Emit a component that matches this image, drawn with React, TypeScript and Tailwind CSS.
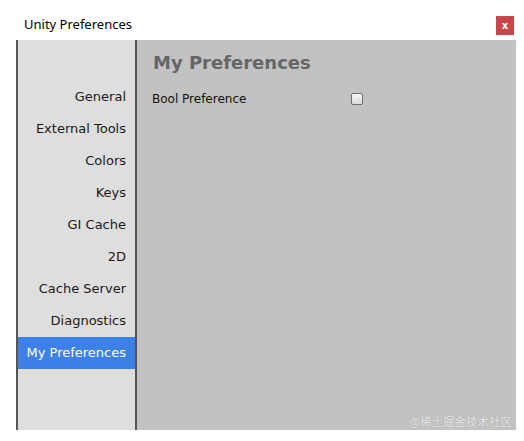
import React from "react";

const items = [
  "General",
  "External Tools",
  "Colors",
  "Keys",
  "GI Cache",
  "2D",
  "Cache Server",
  "Diagnostics",
  "My Preferences",
];

export default function App() {
  return (
    <div className="w-[524px] h-[441px] bg-white flex flex-col overflow-hidden relative">
      <div className="h-[40px] flex items-start justify-between pl-[24px] pr-[10px] pt-[15px]">
        <span className="text-[13px] text-black leading-[18px]" style={{ fontFamily: '"Noto Sans", "Noto Sans CJK SC", sans-serif' }}>
          Unity Preferences
        </span>
        <div className="w-[18px] h-[19px] bg-[#c9474b] flex items-center justify-center mt-[1px]">
          <span className="text-white text-[10px] font-bold leading-none" style={{ fontFamily: '"DejaVu Sans", sans-serif' }}>x</span>
        </div>
      </div>
      <div
        className="ml-[16px] w-[500px] h-[390px] flex"
        style={{ fontFamily: '"DejaVu Sans", sans-serif' }}
      >
        <div className="w-[121px] bg-[#dedede] border-l-2 border-r-2 border-[#555555] flex flex-col pt-[41px]">
          {items.map((it) => {
            const sel = it === "My Preferences";
            return (
              <div
                key={it}
                className={`h-[32px] flex items-center justify-end pr-[9px] text-[13px] ${sel ? "bg-[#3d80e8] text-white" : "text-[#1a1a1a]"}`}
              >
                {it}
              </div>
            );
          })}
        </div>
        <div className="flex-1 bg-[#c2c2c2] flex flex-col pl-[16px] pt-[11px]">
          <div className="text-[18px] font-bold text-[#666666] leading-[24px]">My Preferences</div>
          <div className="flex items-center mt-[16px] h-[16px] -ml-[1px]">
            <span className="text-[12px] text-[#111] w-[199px]">Bool Preference</span>
            <div className="w-[12px] h-[12px] rounded-[2px] border border-[#6d6d6d] bg-gradient-to-b from-[#f7f7f7] to-[#dcdcdc]" />
          </div>
        </div>
      </div>
      <div
        className="absolute right-[12px] top-[413px] text-[11.5px] text-[#e6e6e6] leading-[16px]"
        style={{ fontFamily: '"Noto Sans CJK SC", sans-serif', textShadow: "0 0 1px #999" }}
      >
        @稀土掘金技术社区
      </div>
    </div>
  );
}
